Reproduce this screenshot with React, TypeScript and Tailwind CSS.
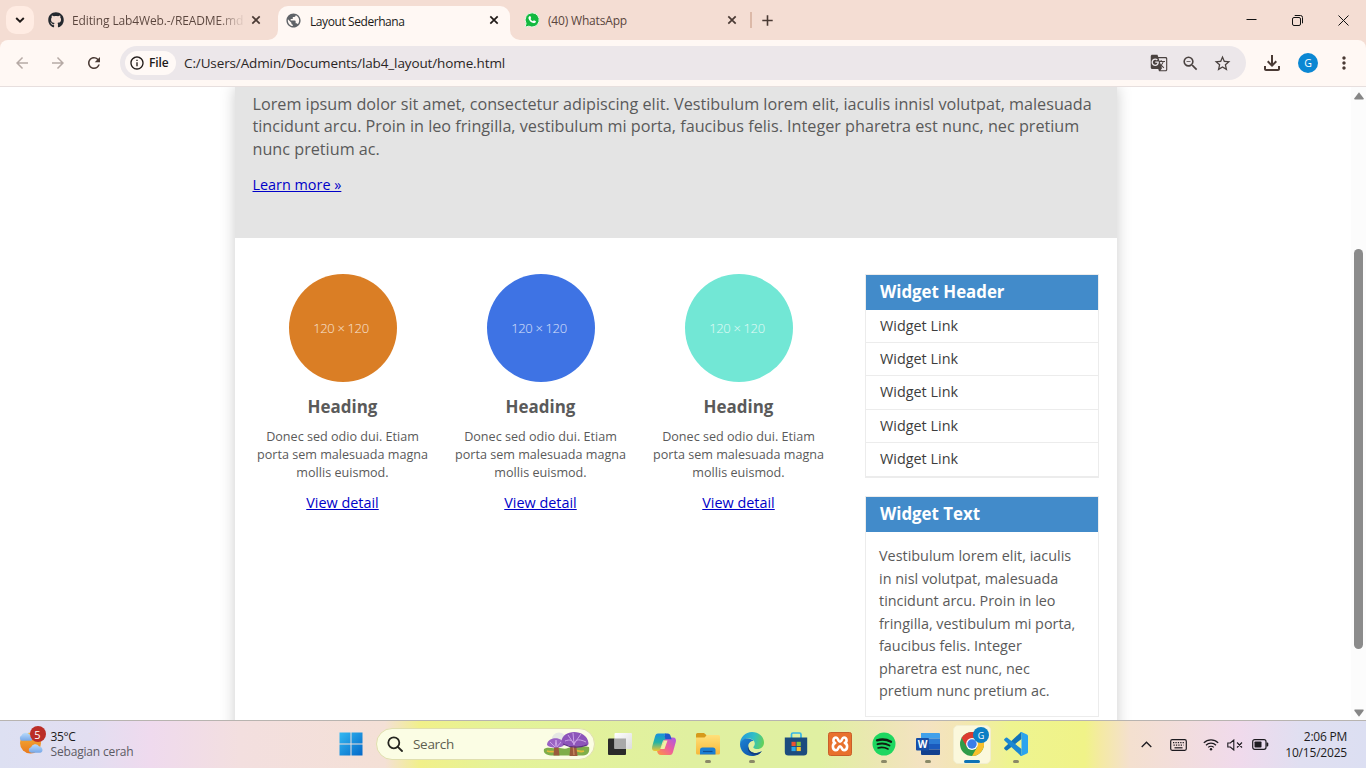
import type { ReactNode } from "react";
import {
  MdArrowBack,
  MdArrowForward,
  MdRefresh,
  MdGTranslate,
  MdZoomOut,
  MdStarBorder,
  MdOutlineFileDownload,
  MdMoreVert,
  MdInfoOutline,
  MdPublic,
} from "react-icons/md";
import { FaGithub } from "react-icons/fa";

function CloseIcon() {
  return (
    <svg width="10" height="10" viewBox="0 0 10 10" fill="none" stroke="currentColor" strokeWidth="1.7">
      <path d="M1.3 1.3 8.7 8.7M8.7 1.3 1.3 8.7" />
    </svg>
  );
}

function WhatsAppIcon() {
  return (
    <svg width="16" height="16" viewBox="0 0 16 16">
      <path d="M8.2.8a7.1 7.1 0 0 0-6.1 10.7L1 15.2l3.8-1A7.1 7.1 0 1 0 8.2.8Z" fill="#12b93f" stroke="#e9f7e6" strokeWidth="1" />
      <path
        d="M5.6 4.3c.3-.3.7-.3.9.1l.6 1.3c.1.3 0 .5-.2.7l-.4.5c.6 1.1 1.400 1.800 2.500 2.300l.6-.7c.2-.2.4-.3.7-.1l1.300.6c.4.2.4.5.2 1-.4.9-1.400 1.300-2.300 1.100-2.500-.6-4.300-2.300-5-4.600-.2-.8.2-1.700.8-2.200Z"
        fill="#fff"
      />
    </svg>
  );
}

function TabStrip() {
  return (
    <div className="flex h-10 shrink-0 items-center bg-[#f4ddd3]">
      <div className="ml-1.5 flex size-7 items-center justify-center rounded-[10px] bg-[#ffece3] text-[#201a18]">
        <svg width="10" height="6" viewBox="0 0 10 6" fill="none" stroke="currentColor" strokeWidth="1.9">
          <path d="M1.200 1 5 4.700 8.800 1" />
        </svg>
      </div>
      <div className="ml-[14px] flex w-[230px] items-center">
        <FaGithub className="size-4 shrink-0 text-[#24292f]" />
        <span className="mt-px ml-2 w-[171px] bg-[linear-gradient(90deg,#5a453d_145px,#5a453d26_168px)] bg-clip-text text-[12px] leading-4 tracking-[-0.12px] whitespace-nowrap text-transparent">
          Editing Lab4Web.-/README.md
        </span>
        <span className="ml-[8px] text-[#4a3a34]"><CloseIcon /></span>
      </div>
      <div className="relative flex h-[34px] w-[232px] items-center self-end rounded-t-[10px] bg-[#fff8f4]">
        <svg className="absolute bottom-0 -left-[10px]" width="10" height="10" viewBox="0 0 10 10" fill="#fff8f4">
          <path d="M10 0v10H0A10 10 0 0 0 10 0Z" />
        </svg>
        <svg className="absolute -right-[10px] bottom-0" width="10" height="10" viewBox="0 0 10 10" fill="#fff8f4">
          <path d="M0 0v10h10A10 10 0 0 1 0 0Z" />
        </svg>
        <MdPublic className="mb-1.5 ml-[7px] size-[17px] text-[#5f6368]" />
        <span className="mb-[3px] ml-2 w-[178px] text-[12px] leading-4 tracking-[-0.42px] whitespace-nowrap text-[#201a18]">
          Layout Sederhana
        </span>
        <span className="mb-1.5 ml-px text-[#201a18]"><CloseIcon /></span>
      </div>
      <div className="ml-[14px] flex w-[226px] items-center">
        <WhatsAppIcon />
        <span className="mt-0.5 ml-2 w-[179px] text-[12px] leading-4 tracking-[-0.18px] whitespace-nowrap text-[#5a453d]">
          (40) WhatsApp
        </span>
        <span className="text-[#4a3a34]"><CloseIcon /></span>
      </div>
      <div className="h-4 w-[1.5px] bg-[#dcb9a8]" />
      <svg className="ml-[10.500px]" width="11" height="11" viewBox="0 0 11 11" fill="none" stroke="#4a3a34" strokeWidth="1.6">
        <path d="M5.500.3v10.400M.3 5.500h10.400" />
      </svg>
      <div className="mr-[17px] ml-auto flex items-center gap-[35px] text-[#111]">
        <svg width="11" height="11" viewBox="0 0 11 11" stroke="currentColor"><path d="M.5 4.500h10" /></svg>
        <svg width="11" height="11" viewBox="0 0 11 11" fill="none" stroke="currentColor">
          <rect x=".5" y="2.500" width="8" height="8" rx="1.500" />
          <path d="M2.700.5h5.800a2 2 0 0 1 2 2v5.800" />
        </svg>
        <svg width="11" height="11" viewBox="0 0 11 11" stroke="currentColor"><path d="M.5.5l10 10M10.500.5l-10 10" /></svg>
      </div>
    </div>
  );
}

function Toolbar() {
  return (
    <div className="h-[47px] shrink-0 bg-[#f4ddd3]">
      <div className="flex h-full items-center rounded-t-lg border-b border-[#e7dfde] bg-[#fff8f4]">
        <MdArrowBack className="ml-[13px] size-[18px] text-[#b6aaa5]" />
        <MdArrowForward className="ml-[18px] size-[18px] text-[#b6aaa5]" />
        <MdRefresh className="ml-[18px] size-[18px] text-[#4a3a34]" />
        <div className="ml-[17px] flex h-[34px] w-[1126px] items-center rounded-full bg-[#ece7ea]">
          <div className="ml-[5px] flex h-6 w-[51px] items-center rounded-full bg-[#fff9f6] text-[#201a18]">
            <MdInfoOutline className="ml-1 size-4" />
            <span className="ml-1 text-[12px] leading-4 font-semibold tracking-[-0.1px]">File</span>
          </div>
          <span className="ml-2 text-[13.5px] leading-5 tracking-[-0.12px] whitespace-nowrap text-[#2a2524]">
            C:/Users/Admin/Documents/lab4_layout/home.html
          </span>
          <div className="mr-[14px] ml-auto flex items-center gap-[13px] text-[#4a4240]">
            <MdGTranslate className="size-[18px]" />
            <MdZoomOut className="size-[19px]" />
            <MdStarBorder className="size-[19px]" />
          </div>
        </div>
        <MdOutlineFileDownload className="ml-[14px] size-6 text-[#4a3a34]" />
        <div className="ml-[14px] flex size-5 items-center justify-center rounded-full bg-[#0b87d3] text-[10.5px] leading-none text-white">
          G
        </div>
        <MdMoreVert className="ml-4 size-5 text-[#4a3a34]" />
      </div>
    </div>
  );
}

function FeatureBox({ circle }: { circle: string }) {
  return (
    <div className="flex w-[198px] flex-col items-center text-center">
      <div className={`flex size-[108px] items-center justify-center rounded-full pr-[4px] text-[13px] leading-none font-light tracking-[-0.35px] text-white/80 ${circle}`}>
        120 × 120
      </div>
      <h3 className="mt-[12.500px] mr-px text-[16.95px] leading-6 font-bold">Heading</h3>
      <p className="mt-[9.500px] mr-px w-[178px] text-[12.6px] leading-[18px]">
        Donec sed odio dui. Etiam porta sem malesuada magna mollis euismod.
      </p>
      <a className="mt-[9.500px] mr-px text-[14.4px] leading-[22px] text-[#0000c8] underline">View detail</a>
    </div>
  );
}

function WidgetTitle({ children }: { children: ReactNode }) {
  return (
    <h3 className="h-[35px] bg-[#428bca] pl-[14px] text-[16.85px] leading-[34px] font-bold text-white">{children}</h3>
  );
}

const links = [
  { label: "Widget Link", size: "h-[33px]" },
  { label: "Widget Link", size: "h-[33px]" },
  { label: "Widget Link", size: "h-[34px]" },
  { label: "Widget Link", size: "h-[33px]" },
  { label: "Widget Link", size: "h-[34px]" },
];

function Page() {
  return (
    <div className="flex min-h-0 flex-1 overflow-hidden bg-white text-[#5a5a5a]">
      <div className="ml-[235px] flex h-[800px] w-[882px] flex-col shadow-[0_0_14px_#ccc]">
        <section className="h-[151px] shrink-0 bg-[#e4e4e4] pt-[5.800px] pl-[17.500px]">
          <p className="w-[846px] text-[16.2px] leading-[22.500px]">
            Lorem ipsum dolor sit amet, consectetur adipiscing elit. Vestibulum lorem elit, iaculis innisl volutpat,
            malesuada tincidunt arcu. Proin in leo fringilla, vestibulum mi porta, faucibus felis. Integer pharetra est
            nunc, nec pretium nunc pretium ac.
          </p>
          <a className="mt-[13.700px] block text-[14.4px] leading-[22px] text-[#0000c8] underline">Learn more »</a>
        </section>
        <div className="flex pt-9">
          <section className="flex pl-[9px]">
            <FeatureBox circle="bg-[#da7e25]" />
            <FeatureBox circle="bg-[#3e73e4]" />
            <FeatureBox circle="bg-[#72e7d5]" />
          </section>
          <aside className="ml-[27px] flex w-[234px] flex-col gap-[18px]">
            <div className="h-[204px] border border-[#ececec]">
              <WidgetTitle>Widget Header</WidgetTitle>
              <ul className="text-[14.4px] text-[#3c3c3c]">
                {links.map(({ label, size }, i) => (
                  <li key={i} className={`border-b border-[#ececec] pl-[14px] leading-[31px] ${size}`}>
                    {label}
                  </li>
                ))}
              </ul>
            </div>
            <div className="h-[221px] border border-[#ececec]">
              <WidgetTitle>Widget Text</WidgetTitle>
              <p className="mt-[13px] ml-[13px] w-[205px] text-[14.4px] leading-[22.500px]">
                Vestibulum lorem elit, iaculis in nisl volutpat, malesuada tincidunt arcu. Proin in leo fringilla,
                vestibulum mi porta, faucibus felis. Integer pharetra est nunc, nec pretium nunc pretium ac.
              </p>
            </div>
          </aside>
        </div>
      </div>
      <div className="ml-auto flex w-[15px] flex-col items-center bg-[#fcfcfc]">
        <svg className="mt-[5px] shrink-0" width="10" height="8" viewBox="0 0 10 8" fill="#868686">
          <path d="M5 .3 9.600 6.200Q10 7.500 9 7.500H1Q0 7.500.4 6.200Z" />
        </svg>
        <div className="mt-[149px] h-[400px] w-[9px] shrink-0 rounded-full bg-[#8b8b8b]" />
        <svg className="mt-[60px] shrink-0" width="10" height="8" viewBox="0 0 10 8" fill="#868686">
          <path d="M5 7.700 9.600 1.800Q10 .5 9 .5H1Q0 .5.4 1.800Z" />
        </svg>
      </div>
    </div>
  );
}

function WeatherIcon() {
  return (
    <div className="relative h-6 w-[26px]">
      <svg width="26" height="24" viewBox="0 0 26 24">
        <defs>
          <linearGradient id="sun" x1="0" y1="0" x2="0" y2="1">
            <stop offset="0" stopColor="#f6b53a" />
            <stop offset="1" stopColor="#e9791c" />
          </linearGradient>
          <linearGradient id="cloud" x1="0" y1="0" x2="0" y2="1">
            <stop offset="0" stopColor="#b9dbfb" />
            <stop offset="1" stopColor="#76a7e8" />
          </linearGradient>
        </defs>
        <circle cx="12.500" cy="12" r="10.500" fill="url(#sun)" />
        <path d="M3.500 9.800a3 3 0 0 1 0-5.400A5 5 0 0 1 12 4c3-.3 3.500 5.800.5 5.800Z" fill="url(#cloud)" />
        <path d="M13 21.800a2.800 2.800 0 0 1 0-5.500 4.500 4.500 0 0 1 8-1c4.500.8 4.500 6.500 1 6.500Z" fill="url(#cloud)" />
      </svg>
      <div className="absolute -top-[5px] left-[12px] flex size-4 items-center justify-center rounded-full bg-[#bb2d27] text-[11px] leading-none text-white">
        5
      </div>
    </div>
  );
}

function WindowsIcon() {
  return (
    <svg width="24" height="24" viewBox="0 0 24 24">
      <defs>
        <linearGradient id="win" x1="0" y1="0" x2="1" y2="1">
          <stop offset="0" stopColor="#33b9f2" />
          <stop offset="1" stopColor="#0468c8" />
        </linearGradient>
      </defs>
      <path d="M.5.5h11v11H.5ZM12.500.5h11v11h-11ZM.5 12.500h11v11H.5ZM12.500 12.500h11v11h-11Z" fill="url(#win)" />
    </svg>
  );
}

function MushroomArt() {
  return (
    <svg width="49" height="26" viewBox="0 0 49 26">
      <circle cx="17" cy="9" r="7.500" fill="#e6e8e4" />
      <path d="M2 18c4-3 8 0 12-1s8 2 12 0 12-3 21-1c1 5-1 8-6 8.500H9C4 24 1 22 2 18Z" fill="#7fae4a" />
      <path d="M5 20c4 2 8-1 11 2M31 20c4-2 6 2 11 0" stroke="#e2b93b" strokeWidth="1.800" fill="none" />
      <path d="M12.500 12h3.500l1.500 12.500h-6ZM29 9h4.500l2 16h-8Z" fill="#9a5a3c" />
      <path d="M31 12l1 12" stroke="#c98a62" strokeWidth="1.300" />
      <path d="M5 14c0-9 17-9 17 0-3 3.500-14 3.500-17 0Z" fill="#9a63c4" />
      <path d="M19.500 12c-1-14 25-15 27 0 0 4-3 2-6 3-5 1-14 1-21-3Z" fill="#8d55ba" />
      <path d="M23 10c5-2 8-1 9 4 0-5 4-7 12-3M31 2l1 11M26 4l6 9M39 3l-7 10M8 11l5 5 1-7 1 7 4-5" stroke="#c9a2e6" strokeWidth="1" fill="none" />
      <path d="M21 13c7 3.500 16 4 24 1" stroke="#5c2f88" strokeWidth="1.200" fill="none" />
    </svg>
  );
}

function TaskViewIcon() {
  return (
    <svg width="24" height="24" viewBox="0 0 24 24">
      <defs>
        <linearGradient id="tvLight" x1="0" y1="0" x2="1" y2="1">
          <stop offset="0" stopColor="#fff" />
          <stop offset="1" stopColor="#dcdcdc" />
        </linearGradient>
      </defs>
      <rect x="0" y="6.500" width="18" height="16.500" rx="1" fill="#2a2a2a" />
      <rect x="6.500" y="1" width="17.500" height="16" rx="1" fill="url(#tvLight)" />
      <path d="M6.500 6.500H18V17H6.500Z" fill="#a9a9a9" />
    </svg>
  );
}

function CopilotIcon() {
  return (
    <svg width="26" height="24" viewBox="0 0 26 24">
      <defs>
        <linearGradient id="cpA" x1="0" y1="0" x2="0" y2="1">
          <stop offset="0" stopColor="#1a8fe0" />
          <stop offset=".5" stopColor="#22b3a5" />
          <stop offset="1" stopColor="#f2c431" />
        </linearGradient>
        <linearGradient id="cpB" x1="1" y1="0" x2="0" y2="1">
          <stop offset="0" stopColor="#a65be8" />
          <stop offset=".5" stopColor="#ee5f9a" />
          <stop offset="1" stopColor="#ff9a3c" />
        </linearGradient>
      </defs>
      <path d="M19 22.500h-9c-2.500 0-3.200-1.500-3.800-3.500l-.7-2.500h4.800L13 7.500C13.600 6 14.600 5 16.500 5H22c2.500 0 3.500 2 2.800 4.500l-2.800 10c-.6 2-1.300 3-3 3Z" fill="url(#cpB)" transform="translate(0 .5)" />
      <path d="M13 8.500h3.500L13.500 17h-3.800Z" fill="#eef3a4" />
      <path d="M17 1.500c2 .3 2.500 2 3 3.700l.6 2H14c-1.500 0-2 1-2.500 2.500L14 1.500Z" fill="#2257cc" />
      <path d="M14.500 7.500H14c-1.500 0-2 1-2.500 2.500l-2.200 7c-.3 1.200-1 2-2.300 2H4C1.500 19 .5 17 1.200 14.500l2.800-10C4.600 2.500 5.300 1.500 7 1.500h8.500c-1.500.4-2 1.500-1.800 3Z" fill="url(#cpA)" />
    </svg>
  );
}

function ExplorerIcon() {
  return (
    <svg width="24" height="24" viewBox="0 0 24 24">
      <defs>
        <linearGradient id="fold" x1="0" y1="0" x2="0" y2="1">
          <stop offset="0" stopColor="#ffe07a" />
          <stop offset="1" stopColor="#f7b93a" />
        </linearGradient>
      </defs>
      <path d="M0 2.500Q0 1 1.500 1H8l2.500 2.300V8H0Z" fill="#d69a1b" />
      <path d="M0 5.500h8.500L11 3h11.500Q24 3 24 4.500V21q0 1.500-1.500 1.500h-21Q0 22.500 0 21Z" fill="url(#fold)" />
      <path d="M4 22.500V18q0-2.500 2.500-2.500H17q2.500 0 2.500 2.500v4.500Z" fill="#1b7fd2" />
      <path d="M7 19.500h9.500" stroke="#0d4f96" strokeWidth="1.200" />
    </svg>
  );
}

function EdgeIcon() {
  return (
    <svg width="24" height="24" viewBox="0 0 24 24">
      <defs>
        <linearGradient id="edTop" x1="0" y1=".3" x2="1" y2=".5">
          <stop offset="0" stopColor="#2499dc" />
          <stop offset=".55" stopColor="#30bfc6" />
          <stop offset="1" stopColor="#62d15a" />
        </linearGradient>
        <linearGradient id="edLow" x1="0" y1="0" x2="1" y2="1">
          <stop offset="0" stopColor="#1c83d6" />
          <stop offset="1" stopColor="#0c4a9c" />
        </linearGradient>
      </defs>
      <path d="M0 12C0 5 5.500 0 12 0s12 4.500 12 10.500c0 4-2.800 6.500-6.500 6.500-2.500 0-4.200-.8-4.200-1.800 0-.8 1.500-1.200 1.500-3.700 0-3-3-5-6.500-5C4 6.500 1 9 0 12Z" fill="url(#edTop)" />
      <path d="M0 12c.5-3.500 4-5.500 7.500-5.500 3 0 5 1 6 2.500-3 0-5.200 2-5.200 5.200 0 4.300 4 7.300 8.200 6.800 2-.2 4-1 5.300-2C20 22 16 24 12 24 5 24 0 18.500 0 12Z" fill="url(#edLow)" />
      <path d="M8.300 14.200c0 4.300 4 7.300 8.200 6.800 2-.2 4-1 5.300-2-1 1.800-2.500 3-4 3.800C11 23.500 6.500 19 8.300 14.200Z" fill="#123f7c" />
    </svg>
  );
}

function StoreIcon() {
  return (
    <svg width="24" height="24" viewBox="0 0 24 24">
      <path d="M7.500 6V2.500Q7.500 1 9 1h6.500Q17 1 17 2.500V6" stroke="#35b5e6" strokeWidth="1.700" fill="none" />
      <path d="M.8 5.500h22.400V20q0 3.500-3.500 3.500H4.300Q.8 23.500.8 20Z" fill="#1b4c7e" />
      <path d="M7.500 9.800h4.200V14H7.500Z" fill="#ee5230" />
      <path d="M12.600 9.800h4.200V14h-4.200Z" fill="#86c440" />
      <path d="M7.500 14.900h4.200v4.200H7.500Z" fill="#2ba8ea" />
      <path d="M12.600 14.900h4.200v4.200h-4.200Z" fill="#fbc32d" />
    </svg>
  );
}

function XamppIcon() {
  return (
    <svg width="24" height="24" viewBox="0 0 24 24">
      <rect x=".5" y=".5" width="23" height="23" rx="2" fill="#e8712d" stroke="#c95f2a" />
      <path
        d="M8 5.500c-3 0-3.500 4.500-.8 5.500C4 12 4 18 8 18.300c2.500.1 2-4 4-4s1.500 4 4 4c4-.3 4-6.300.8-7.300 2.700-1 2.200-5.500-.8-5.500-2.300 0-2 4.300-4 4.300S10.300 5.500 8 5.500Z"
        fill="none"
        stroke="#fff"
        strokeWidth="2.600"
        strokeLinejoin="round"
      />
    </svg>
  );
}

function SpotifyIcon() {
  return (
    <svg width="24" height="24" viewBox="0 0 24 24">
      <circle cx="12" cy="12" r="11.500" fill="#1ed760" />
      <g fill="none" stroke="#101e12" strokeLinecap="round">
        <path d="M5 8.300c4.500-1.300 10-.8 14 1.400" strokeWidth="2.300" />
        <path d="M5.500 12.200c4-1.100 8.500-.6 12 1.300" strokeWidth="1.900" />
        <path d="M6 15.900c3.500-.9 7-.5 10 1.100" strokeWidth="1.600" />
      </g>
    </svg>
  );
}

function WordIcon() {
  return (
    <div className="relative size-6">
      <svg width="24" height="24" viewBox="0 0 24 24">
        <path d="M5 1h18q1 0 1 1v4.500H5Z" fill="#41a0ea" />
        <path d="M5 6.500h19V12H5Z" fill="#2b7bd4" />
        <path d="M5 12h19v5.500H5Z" fill="#1a5abd" />
        <path d="M5 17.500h19V22q0 1-1 1H6q-1 0-1-1Z" fill="#123f8e" />
        <rect x="0" y="6" width="13" height="12.500" rx="1" fill="#174ea6" />
      </svg>
      <span className="absolute top-[6px] left-0 w-[13px] text-center text-[10px] leading-[12px] font-bold text-white">W</span>
    </div>
  );
}

function ChromeIcon() {
  return (
    <div className="relative size-6">
      <svg width="24" height="24" viewBox="0 0 24 24">
        <circle cx="12" cy="12" r="12" fill="#2f9c48" />
        <path d="M1.600 6A12 12 0 0 1 22.400 6H12L6.800 15Z" fill="#dd3b30" />
        <path d="M22.400 6A12 12 0 0 1 12 24l5.200-9L12 6Z" fill="#f8c02c" />
        <circle cx="12" cy="12" r="5.900" fill="#fff" />
        <circle cx="12" cy="12" r="4.700" fill="#3a7ee8" />
      </svg>
      <div className="absolute -top-[5px] left-[13px] flex size-4 items-center justify-center rounded-full bg-[#0c7fc4] text-[9px] leading-none text-white">
        G
      </div>
    </div>
  );
}

function VsCodeIcon() {
  return (
    <svg width="24" height="24" viewBox="0 0 24 24">
      <path d="M17.500 0 17.500 7 3.300 18.200Q2.500 18.800 1.800 18.200L.4 16.900Q-.2 16.200.4 15.500L16 1Q16.800.2 17.500 0Z" fill="#1173b8" />
      <path d="M17.500 24 17.500 17 3.300 5.800Q2.500 5.200 1.800 5.800L.4 7.100Q-.2 7.800.4 8.500L16 23Q16.800 23.800 17.500 24Z" fill="#1b88d2" />
      <path d="M17.500 0 23 2.500Q24 3 24 4v16q0 1-1 1.500L17.500 24Q16.500 24 16 23q1.500.3 1.500-1.200V2.200Q17.500.7 16 1q.5-1 1.500-1Z" fill="#2ba4ee" />
    </svg>
  );
}

function TaskCell({ children, mark }: { children: ReactNode; mark?: "open" | "active" }) {
  return (
    <div className="flex h-[47px] w-11 flex-col items-center">
      <div
        className={
          mark === "active"
            ? "mt-1 flex h-[39px] w-[38px] flex-col items-center rounded-[5px] border border-[#f2eecf] bg-[#fbf8dc] pt-[6px]"
            : "mt-1 flex h-[39px] w-[38px] flex-col items-center pt-[7px]"
        }
      >
        <div className="flex h-6 items-center">{children}</div>
        {mark === "open" && <div className="mt-[4px] h-[3px] w-1.5 shrink-0 rounded-full bg-[#8a8968]" />}
        {mark === "active" && <div className="mt-[4px] h-[3px] w-4 shrink-0 rounded-full bg-[#0d73b5]" />}
      </div>
    </div>
  );
}

function Taskbar() {
  return (
    <div className="flex h-12 shrink-0 items-start border-t border-[#b8b4b0] bg-[linear-gradient(90deg,#dde0f2_0px,#e2def1_90px,#efdaee_150px,#f3dfdf_240px,#f4e0d6_385px,#f1f08a_420px,#e4f398_500px,#e0f0a0_690px,#e0f0a2_820px,#eae8b0_870px,#f4e2c2_925px,#f3e6b4_960px,#eef490_1010px,#f0f388_1085px,#f4eaa2_1100px,#f4e0cf_1130px,#f0daec_1240px,#e0dff1_1300px,#dcdff2_1366px)]">
      <div className="flex w-[329px] pt-[8px] pl-[17.500px]">
        <div className="pt-[2px]"><WeatherIcon /></div>
        <div className="ml-[7px] text-[12px] leading-4">
          <div className="tracking-[-0.35px] text-[#1c1c20]">35°C</div>
          <div className="-mt-px tracking-[-0.17px] text-[#5c5a63]">Sebagian cerah</div>
        </div>
      </div>
      <TaskCell><WindowsIcon /></TaskCell>
      <div className="mr-[3px] ml-[3px] mt-[7px] flex h-8 w-[219px] items-center rounded-full border border-[#e0dfae] bg-[#fbfde4]">
        <svg className="ml-[10px]" width="16" height="16" viewBox="0 0 16 16" fill="none" stroke="#25251f" strokeWidth="1.800">
          <circle cx="6.800" cy="6.800" r="5.500" />
          <path d="m10.800 10.800 4.200 4.200" strokeLinecap="round" />
        </svg>
        <span className="ml-[10px] text-[13.5px] leading-5 tracking-[-0.3px] text-[#5e5e50]">Search</span>
        <div className="mr-[3px] ml-auto"><MushroomArt /></div>
      </div>
      <TaskCell><TaskViewIcon /></TaskCell>
      <TaskCell><CopilotIcon /></TaskCell>
      <TaskCell mark="open"><ExplorerIcon /></TaskCell>
      <TaskCell mark="open"><EdgeIcon /></TaskCell>
      <TaskCell><StoreIcon /></TaskCell>
      <TaskCell><XamppIcon /></TaskCell>
      <TaskCell mark="open"><SpotifyIcon /></TaskCell>
      <TaskCell mark="open"><WordIcon /></TaskCell>
      <TaskCell mark="active"><ChromeIcon /></TaskCell>
      <TaskCell mark="open"><VsCodeIcon /></TaskCell>
      <div className="mr-[19px] ml-auto flex h-[47px] items-center text-[#1d1b20]">
        <svg width="11" height="7" viewBox="0 0 11 7" fill="none" stroke="currentColor" strokeWidth="1.300">
          <path d="m.7 6 4.800-4.800L10.300 6" />
        </svg>
        <svg className="ml-[18px]" width="17" height="12" viewBox="0 0 17 12" fill="none" stroke="currentColor">
          <rect x=".7" y=".7" width="15.600" height="10.600" rx="1.500" strokeWidth="1.200" />
          <path d="M3 3.700h11M3.500 6.200h10" strokeDasharray="1.300 1.100" strokeWidth="1.200" />
          <path d="M4.500 8.800h8" strokeWidth="1.200" />
        </svg>
        <svg className="ml-[16px]" width="16" height="13" viewBox="0 0 16 13" fill="none" stroke="currentColor" strokeWidth="1.200">
          <path d="M.8 4.800a10.200 10.200 0 0 1 14.400 0M3 7.200a7.100 7.100 0 0 1 10 0M5.200 9.400a4 4 0 0 1 5.600 0" />
          <circle cx="8" cy="11.300" r="1.200" fill="currentColor" stroke="none" />
        </svg>
        <svg className="ml-[8px]" width="17" height="12" viewBox="0 0 17 12" fill="none" stroke="currentColor" strokeWidth="1.100">
          <path d="M.8 4v4h2.500L6.800 11V1L3.300 4ZM10 3.500l5 5M15 3.500l-5 5" />
        </svg>
        <svg className="ml-2" width="17" height="11" viewBox="0 0 17 11">
          <rect x=".7" y=".7" width="13.300" height="9.600" rx="2" fill="none" stroke="currentColor" strokeWidth="1.200" />
          <rect x="2.500" y="2.500" width="7" height="6" rx=".8" fill="currentColor" />
          <path d="M14.500 3.500h.8q1 0 1 1v2q0 1-1 1h-.8Z" fill="currentColor" />
        </svg>
        <div className="ml-[16px] flex flex-col items-end text-[12px] leading-4">
          <span className="tracking-[-0.24px]">2:06 PM</span>
          <span className="tracking-[-0.2px]">10/15/2025</span>
        </div>
      </div>
    </div>
  );
}

export default function App() {
  return (
    <div className="flex h-screen w-full flex-col overflow-hidden font-['Open_Sans','Noto_Sans',sans-serif]">
      <TabStrip />
      <Toolbar />
      <Page />
      <Taskbar />
    </div>
  );
}
